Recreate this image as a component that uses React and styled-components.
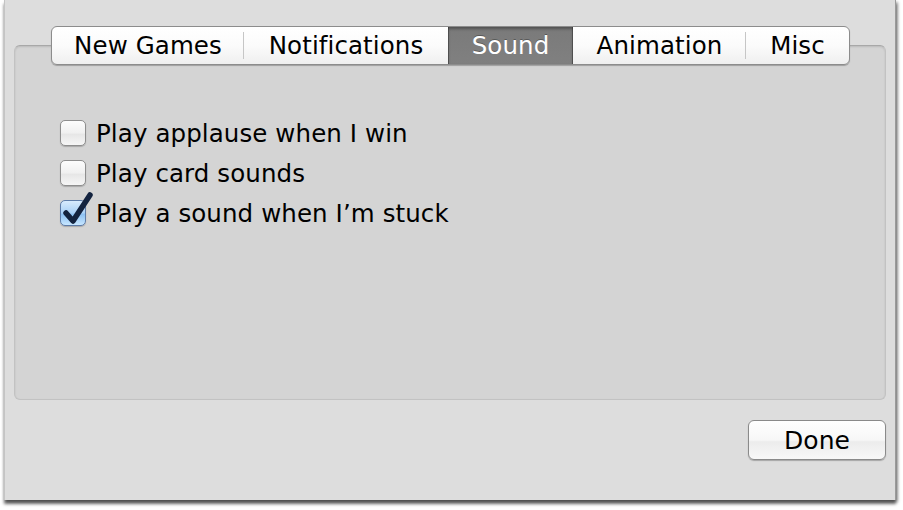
import React from "react";
import styled, { createGlobalStyle } from "styled-components";

const Global = createGlobalStyle`
  html, body { margin: 0; padding: 0; background: #ffffff; }
  body { font-family: "DejaVu Sans", "Liberation Sans", sans-serif; }
`;

const Page = styled.div`
  width: 903px;
  height: 510px;
  overflow: hidden;
  background: #ffffff;
`;

const Window = styled.div`
  margin-left: 4px;
  width: 892px;
  height: 500px;
  box-sizing: border-box;
  padding: 26px 9px 0 9px;
  background: #dddddd;
  border-left: 1px solid #c4c4c4;
  border-right: 1px solid #9a9a9a;
  box-shadow: 0 4px 3px rgba(0, 0, 0, 0.55), 2px 2px 3px rgba(0, 0, 0, 0.35);
  display: flex;
  flex-direction: column;
`;

const TabRow = styled.div`
  display: flex;
  justify-content: center;
  position: relative;
  z-index: 2;
  padding-left: 1px;
`;

const Tabs = styled.div`
  display: flex;
  height: 39px;
  box-sizing: border-box;
  border: 1px solid #8c8c8c;
  border-radius: 6px;
  background: linear-gradient(#ffffff, #fbfbfb 50%, #efefef);
  box-shadow: 0 1px 1px rgba(0, 0, 0, 0.25);
  overflow: hidden;
`;

const Tab = styled.div`
  width: ${(p) => p.$w}px;
  box-sizing: border-box;
  display: flex;
  align-items: center;
  justify-content: center;
  font-size: 24.5px;
  letter-spacing: 0.1px;
  color: ${(p) => (p.$active ? "#ffffff" : "#000000")};
  background: ${(p) =>
    p.$active ? "linear-gradient(#7a7a7a, #808080)" : "transparent"};
  box-shadow: ${(p) =>
    p.$active ? "inset 0 2px 3px rgba(0,0,0,0.35), inset 1px 0 0 #5a5a5a, inset -1px 0 0 #5a5a5a" : "none"};
  text-shadow: ${(p) => (p.$active ? "0 -1px 0 rgba(0,0,0,0.3)" : "none")};
  position: relative;
  &::after {
    content: "";
    display: ${(p) => (p.$divider ? "block" : "none")};
    position: absolute;
    right: 0;
    top: 5px;
    bottom: 5px;
    width: 1px;
    background: #c6c6c6;
  }
`;

const Group = styled.div`
  margin-top: -20px;
  height: 355px;
  box-sizing: border-box;
  background: #d4d4d4;
  border-radius: 6px;
  border: 1px solid #c2c2c2;
  border-top-color: #a8a8a8;
  box-shadow: inset 0 1px 2px rgba(0, 0, 0, 0.12);
  padding: 67px 0 0 45px;
  display: flex;
  flex-direction: column;
`;

const Row = styled.label`
  height: 40px;
  display: flex;
  align-items: center;
  gap: 10px;
  font-size: 24.5px;
  letter-spacing: 0.1px;
  color: #000;
`;

const Box = styled.span`
  position: relative;
  width: 26px;
  height: 26px;
  box-sizing: border-box;
  border-radius: 5px;
  border: 1px solid ${(p) => (p.$checked ? "#5e7ca8" : "#8e8e8e")};
  background: ${(p) =>
    p.$checked
      ? "linear-gradient(#d8ebfd, #a9d0f6 50%, #8cc0f2 55%, #c7e6ff)"
      : "linear-gradient(#fdfdfd, #f0f0f0 50%, #e6e6e6 55%, #f6f6f6)"};
  box-shadow: 0 1px 1px rgba(0, 0, 0, 0.2);
  flex: none;
`;

const Check = styled.svg`
  position: absolute;
  left: 2px;
  top: -9px;
  width: 30px;
  height: 34px;
  overflow: visible;
`;

const Footer = styled.div`
  display: flex;
  justify-content: flex-end;
  padding: 20px 0 0 0;
`;

const Button = styled.button`
  width: 138px;
  height: 40px;
  box-sizing: border-box;
  border: 1px solid #8a8a8a;
  border-radius: 6px;
  background: linear-gradient(#ffffff, #f7f7f7 50%, #ececec 55%, #f8f8f8);
  box-shadow: 0 1px 1px rgba(0, 0, 0, 0.25);
  font-family: "DejaVu Sans", "Liberation Sans", sans-serif;
  font-size: 25px;
  color: #000;
  padding: 0;
`;

const tabs = [
  { label: "New Games", w: 192 },
  { label: "Notifications", w: 204 },
  { label: "Sound", w: 125, active: true },
  { label: "Animation", w: 173 },
  { label: "Misc", w: 103 },
];

const options = [
  { label: "Play applause when I win", checked: false },
  { label: "Play card sounds", checked: false },
  { label: "Play a sound when I\u2019m stuck", checked: true },
];

export default function App() {
  return (
    <Page>
      <Global />
      <Window>
        <TabRow>
          <Tabs>
            {tabs.map((t, i) => {
              const next = tabs[i + 1];
              const divider = next && !t.active && !next.active;
              return (
                <Tab key={t.label} $w={t.w} $active={t.active} $divider={divider}>
                  {t.label}
                </Tab>
              );
            })}
          </Tabs>
        </TabRow>
        <Group>
          {options.map((o) => (
            <Row key={o.label}>
              <Box $checked={o.checked}>
                {o.checked && (
                  <Check viewBox="0 0 30 34">
                    <path
                      d="M3 21 L10 29 L27 3"
                      fill="none"
                      stroke="#13233f"
                      strokeWidth="5.5"
                      strokeLinecap="round"
                      strokeLinejoin="round"
                    />
                  </Check>
                )}
              </Box>
              {o.label}
            </Row>
          ))}
        </Group>
        <Footer>
          <Button>Done</Button>
        </Footer>
      </Window>
    </Page>
  );
}
